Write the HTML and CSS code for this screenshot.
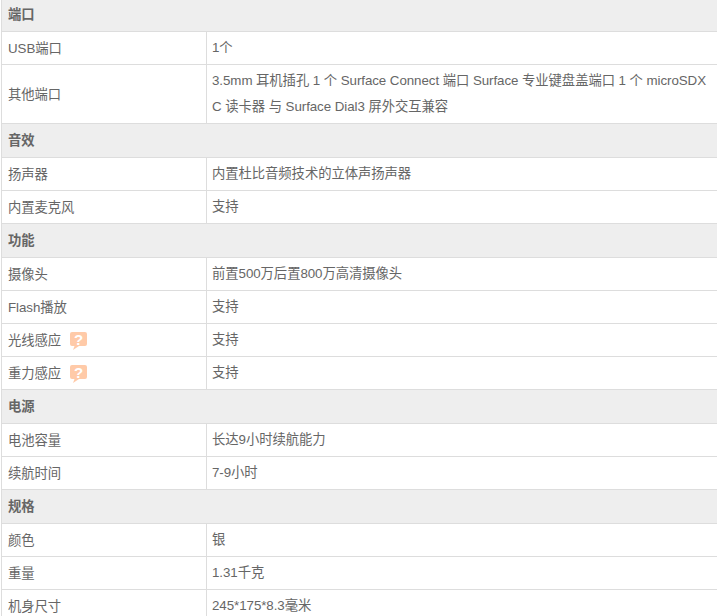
FILE: index.html
```html
<!DOCTYPE html>
<html lang="zh">
<head>
<meta charset="utf-8">
<title>规格参数</title>
<link rel="stylesheet" href="styles.css">
</head>
<body>
<table class="spec">
<colgroup><col class="col-name"><col class="col-value"></colgroup>
<tbody>
<tr class="group"><th colspan="2">端口</th></tr>
<tr><td>USB端口</td><td>1个</td></tr>
<tr class="tall"><td>其他端口</td><td>3.5mm 耳机插孔 1 个 Surface Connect 端口 Surface 专业键盘盖端口 1 个 microSDXC 读卡器 与 Surface Dial3 屏外交互兼容</td></tr>
<tr class="group"><th colspan="2">音效</th></tr>
<tr><td>扬声器</td><td>内置杜比音频技术的立体声扬声器</td></tr>
<tr><td>内置麦克风</td><td>支持</td></tr>
<tr class="group"><th colspan="2">功能</th></tr>
<tr><td>摄像头</td><td>前置500万后置800万高清摄像头</td></tr>
<tr><td>Flash播放</td><td>支持</td></tr>
<tr><td>光线感应<span class="help"><svg width="17" height="19" viewBox="0 0 17 19"><path class="bubble" d="M2 0H15Q17 0 17 2V12Q17 14 15 14H9L3 18L4.500 14H2Q0 14 0 12V2Q0 0 2 0Z"/><text class="mark" x="8.500" y="12.500">?</text></svg></span></td><td>支持</td></tr>
<tr><td>重力感应<span class="help"><svg width="17" height="19" viewBox="0 0 17 19"><path class="bubble" d="M2 0H15Q17 0 17 2V12Q17 14 15 14H9L3 18L4.500 14H2Q0 14 0 12V2Q0 0 2 0Z"/><text class="mark" x="8.500" y="12.500">?</text></svg></span></td><td>支持</td></tr>
<tr class="group"><th colspan="2">电源</th></tr>
<tr><td>电池容量</td><td>长达9小时续航能力</td></tr>
<tr><td>续航时间</td><td>7-9小时</td></tr>
<tr class="group"><th colspan="2">规格</th></tr>
<tr><td>颜色</td><td>银</td></tr>
<tr><td>重量</td><td>1.31千克</td></tr>
<tr><td>机身尺寸</td><td>245*175*8.3毫米</td></tr>
</tbody>
</table>
</body>
</html>
```
FILE: styles.css
```css
html, body {
  margin: 0;
  padding: 0;
  background: #fff;
  overflow: hidden;
  height: 616px;
}
.spec {
  border-collapse: collapse;
  table-layout: fixed;
  width: 717px;
  margin: -3px 0 0 1px;
  font: 13.333px/26px "Liberation Sans", "Noto Sans CJK SC", sans-serif;
  letter-spacing: -0.06px;
  color: #666;
}
.col-name { width: 205px; }
.spec td, .spec th {
  border: 1px solid #ddd;
  padding: 3px 6px;
  text-align: left;
  vertical-align: middle;
  word-break: break-all;
}
.spec td:first-child { padding-top: 4px; padding-bottom: 2px; }
.spec td + td { padding-left: 5px; padding-right: 3px; }
.group th {
  background: #eee;
  font-weight: bold;
  padding: 4px 6px 3px;
}
.help {
  display: inline-block;
  margin-left: 9px;
  height: 19px;
  vertical-align: -6px;
  line-height: 0;
}
.bubble { fill: #ffcaa8; }
.mark {
  fill: #fff;
  font: bold 15px "Liberation Sans", sans-serif;
  text-anchor: middle;
}
```
